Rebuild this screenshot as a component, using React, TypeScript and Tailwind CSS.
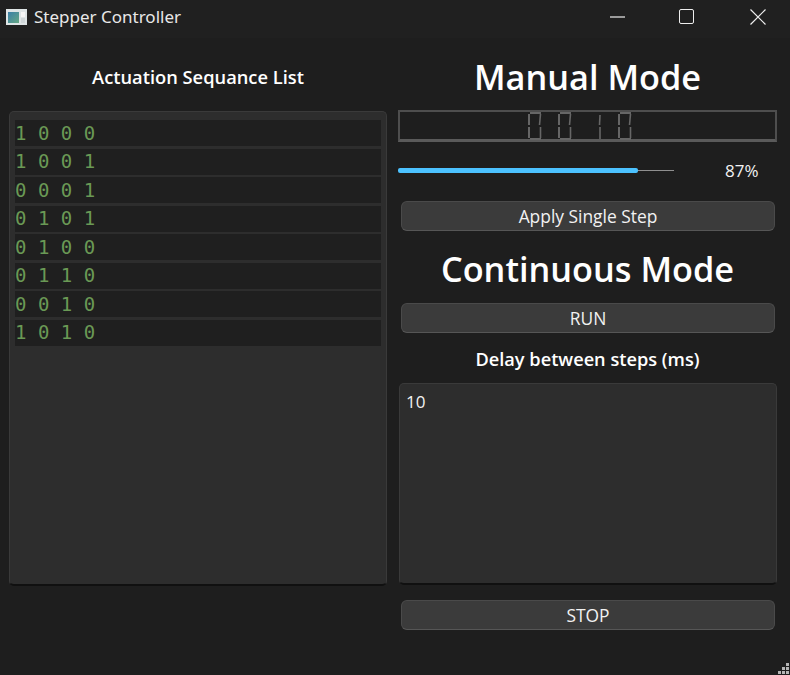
import React from "react";

const seqs = ["1 0 0 0", "1 0 0 1", "0 0 0 1", "0 1 0 1", "0 1 0 0", "0 1 1 0", "0 0 1 0", "1 0 1 0"];

function Digit({ d }: { d: string }) {
  const zero = d === "0";
  const c = "#666666";
  return (
    <svg width="14" height="28" viewBox="0 0 14 28" fill="none" stroke={c} strokeWidth="2">
      {zero && <path d="M2 1H13" />}
      {zero && <path d="M1 2V13" />}
      <path d={zero ? "M12.5 2L11.5 13" : "M12 3L11.5 13"} strokeWidth="1.6" />
      {zero && <path d="M1 15V26" />}
      <path d={zero ? "M12.5 15L12.5 26" : "M12 15L12 27"} strokeWidth="1.6" />
      {zero && <path d="M2 27H13" />}
    </svg>
  );
}

function Btn({ children, className = "" }: { children: React.ReactNode; className?: string }) {
  return (
    <div className={`ml-[3px] mr-[2px] h-[30px] flex items-center justify-center rounded-[6px] bg-[#3b3b3b] border border-[#4a4a4a] border-b-[#565656] text-[17.4px] text-[#f2f2f2] ${className}`}>
      {children}
    </div>
  );
}

export default function App() {
  return (
    <div className="relative w-[790px] h-[675px] overflow-hidden bg-[#1e1e1e] text-white font-['Open_Sans','Noto_Sans',sans-serif]">
      {/* title bar */}
      <div className="h-[38px] bg-[#202020] flex items-center justify-between">
        <div className="flex items-center mb-[5px]">
          <svg className="ml-[6px]" width="21" height="16" viewBox="0 0 21 16">
            <defs>
              <linearGradient id="g" x1="0" y1="0" x2="1" y2="1">
                <stop offset="0" stopColor="#3b7fa8" />
                <stop offset="1" stopColor="#66a884" />
              </linearGradient>
            </defs>
            <rect x="0" y="0" width="21" height="16" fill="#dfe5e6" />
            <rect x="2" y="3" width="11" height="11" fill="url(#g)" />
            <rect x="15" y="3" width="4" height="5" fill="#f5f5f5" />
            <rect x="15" y="9" width="4" height="5" fill="#cfd6d8" />
          </svg>
          <span className="ml-[7px] text-[17px] leading-none text-[#e8e8e8] font-['Noto_Sans',sans-serif]">Stepper Controller</span>
        </div>
        <div className="flex items-center mb-[5px]">
          <svg className="mr-[53px]" width="16" height="2" viewBox="0 0 16 2"><path d="M0 1H15" stroke="#eeeeee" strokeWidth="1.2" /></svg>
          <div className="mr-[56px] w-[15px] h-[15px] border-[1.5px] border-[#eeeeee] rounded-[2px]" />
          <svg className="mr-[24px]" width="16" height="16" viewBox="0 0 16 16"><path d="M0.5 0.5L15.5 15.5M15.5 0.5L0.5 15.5" stroke="#eeeeee" strokeWidth="1.2" /></svg>
        </div>
      </div>

      {/* body */}
      <div className="flex gap-[11px] pl-[9px] pr-[13px]">
        {/* left column */}
        <div className="w-[378px] flex flex-col">
          <div className="h-[73px] pt-[4px] flex items-center justify-center text-[18.3px] font-semibold">Actuation Sequance List</div>
          <div className="h-[475px] rounded-[5px] bg-[#2d2d2d] border border-[#3a3a3a] border-b-[2px] border-b-[#101010] px-[5px] pt-[8px] flex flex-col gap-[2.5px]">
            {seqs.map((s, i) => (
              <div key={i} className="h-[26px] shrink-0 bg-[#1f1f1f] flex items-center font-['DejaVu_Sans_Mono',monospace] text-[19px] leading-none text-[#6a9955] whitespace-pre">
                {s}
              </div>
            ))}
          </div>
        </div>

        {/* right column */}
        <div className="w-[379px] flex flex-col">
          <div className="h-[72px] pt-[6px] flex items-center justify-center text-[34.3px] leading-none font-semibold">Manual Mode</div>
          <div className="h-[32px] border-2 border-[#4e4e4e] border-b-[3px] border-b-[#5a5a5a] flex items-center justify-center gap-[16px] pr-[15px]">
            <Digit d="0" />
            <Digit d="0" />
            <Digit d="1" />
            <Digit d="0" />
          </div>
          <div className="mt-[21px] h-[15px] flex items-center">
            <div className="relative w-[276px] h-[1.5px] bg-[#8f8f8f]">
              <div className="absolute left-0 top-[-2px] w-[240px] h-[5px] rounded-[2px] bg-[#4cc2ff]" />
            </div>
            <span className="ml-[51px] text-[17px] text-[#f2f2f2]">87%</span>
          </div>
          <Btn className="mt-[23px]">Apply Single Step</Btn>
          <div className="h-[72px] pt-[4px] flex items-center justify-center text-[34.3px] leading-none font-semibold">Continuous Mode</div>
          <Btn>RUN</Btn>
          <div className="h-[50px] pt-[3px] flex items-center justify-center text-[18.2px] font-semibold">Delay between steps (ms)</div>
          <div className="h-[202px] ml-[1px] rounded-[5px] bg-[#2d2d2d] border border-[#3a3a3a] border-b-[2px] border-b-[#101010] px-[6px] pt-[5px] text-[17px] text-[#f2f2f2]">10</div>
          <Btn className="mt-[15px]">STOP</Btn>
        </div>
      </div>

      {/* size grip */}
      <svg className="absolute right-0 bottom-0" width="12" height="12" viewBox="0 0 12 12" fill="#b5b5b5">
        <rect x="8" y="0" width="3" height="3" />
        <rect x="4" y="4" width="3" height="3" />
        <rect x="8" y="4" width="3" height="3" />
        <rect x="0" y="8" width="3" height="3" />
        <rect x="4" y="8" width="3" height="3" />
        <rect x="8" y="8" width="3" height="3" />
      </svg>
    </div>
  );
}
